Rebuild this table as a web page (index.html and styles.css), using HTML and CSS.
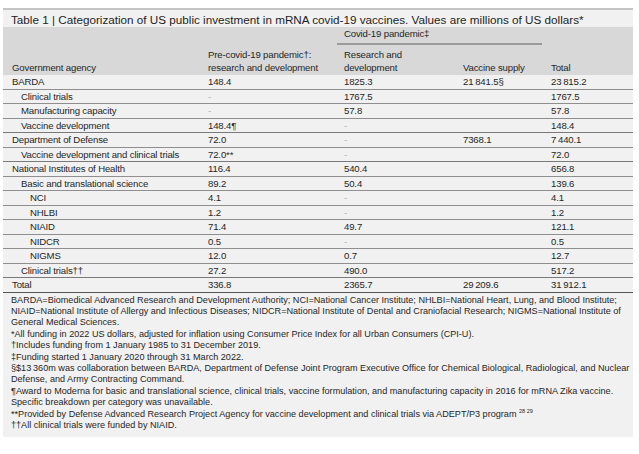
FILE: index.html
```html
<!DOCTYPE html>
<html>
<head>
<meta charset="utf-8">
<link rel="stylesheet" href="styles.css">
</head>
<body>
<div class="wrap">
  <div class="title">Table 1 | Categorization of US public investment in mRNA covid-19 vaccines. Values are millions of US dollars*</div>
  <table class="tbl">
    <colgroup>
      <col class="c1"><col class="c2"><col class="c3"><col class="c4"><col class="c5">
    </colgroup>
    <thead>
      <tr class="h1">
        <th></th><th></th>
        <th colspan="2" class="group"><div class="group-label">Covid-19 pandemic‡</div></th>
        <th></th>
      </tr>
      <tr class="h2">
        <th class="first">Government agency</th>
        <th>Pre-covid-19 pandemic†:<br>research and development</th>
        <th>Research and<br>development</th>
        <th>Vaccine supply</th>
        <th>Total</th>
      </tr>
    </thead>
    <tbody>
      <tr class="grp"><td class="l0">BARDA</td><td>148.4</td><td>1825.3</td><td>21&thinsp;841.5§</td><td>23&thinsp;815.2</td></tr>
      <tr><td class="l1">Clinical trials</td><td class="dash">-</td><td>1767.5</td><td></td><td>1767.5</td></tr>
      <tr><td class="l1">Manufacturing capacity</td><td class="dash">-</td><td>57.8</td><td></td><td>57.8</td></tr>
      <tr><td class="l1">Vaccine development</td><td>148.4¶</td><td class="dash">-</td><td></td><td>148.4</td></tr>
      <tr class="grp"><td class="l0">Department of Defense</td><td>72.0</td><td class="dash">-</td><td>7368.1</td><td>7&thinsp;440.1</td></tr>
      <tr><td class="l1">Vaccine development and clinical trials</td><td>72.0**</td><td class="dash">-</td><td></td><td>72.0</td></tr>
      <tr class="grp"><td class="l0">National Institutes of Health</td><td>116.4</td><td>540.4</td><td></td><td>656.8</td></tr>
      <tr><td class="l1">Basic and translational science</td><td>89.2</td><td>50.4</td><td></td><td>139.6</td></tr>
      <tr><td class="l2">NCI</td><td>4.1</td><td class="dash">-</td><td></td><td>4.1</td></tr>
      <tr><td class="l2">NHLBI</td><td>1.2</td><td class="dash">-</td><td></td><td>1.2</td></tr>
      <tr><td class="l2">NIAID</td><td>71.4</td><td>49.7</td><td></td><td>121.1</td></tr>
      <tr><td class="l2">NIDCR</td><td>0.5</td><td class="dash">-</td><td></td><td>0.5</td></tr>
      <tr><td class="l2">NIGMS</td><td>12.0</td><td>0.7</td><td></td><td>12.7</td></tr>
      <tr><td class="l1">Clinical trials††</td><td>27.2</td><td>490.0</td><td></td><td>517.2</td></tr>
      <tr class="grp total"><td class="l0">Total</td><td>336.8</td><td>2365.7</td><td>29&thinsp;209.6</td><td>31&thinsp;912.1</td></tr>
    </tbody>
  </table>
  <div class="notes">
    <p>BARDA=Biomedical Advanced Research and Development Authority; NCI=National Cancer Institute; NHLBI=National Heart, Lung, and Blood Institute;<br>NIAID=National Institute of Allergy and Infectious Diseases; NIDCR=National Institute of Dental and Craniofacial Research; NIGMS=National Institute of<br>General Medical Sciences.</p>
    <p>*All funding in 2022 US dollars, adjusted for inflation using Consumer Price Index for all Urban Consumers (CPI-U).</p>
    <p>†Includes funding from 1 January 1985 to 31 December 2019.</p>
    <p>‡Funding started 1 January 2020 through 31 March 2022.</p>
    <p>§$13&thinsp;360m was collaboration between BARDA, Department of Defense Joint Program Executive Office for Chemical Biological, Radiological, and Nuclear<br>Defense, and Army Contracting Command.</p>
    <p>¶Award to Moderna for basic and translational science, clinical trials, vaccine formulation, and manufacturing capacity in 2016 for mRNA Zika vaccine.<br>Specific breakdown per category was unavailable.</p>
    <p>**Provided by Defense Advanced Research Project Agency for vaccine development and clinical trials via ADEPT/P3 program <sup>28 29</sup></p>
    <p>††All clinical trials were funded by NIAID.</p>
  </div>
</div>
</body>
</html>
```

FILE: styles.css
```css
html, body {
  margin: 0;
  padding: 0;
  background: #ffffff;
}
body {
  font-family: "Liberation Sans", Arial, sans-serif;
  color: #262626;
}
.wrap {
  width: 630px;
  margin: 8px 0 0 3px;
  border-top: 2px solid #c4c4c4;
}
.title {
  background: #f1f1f1;
  font-size: 11.7px;
  line-height: 17px;
  padding: 1px 0 0 8px;
  height: 16px;
  color: #1e1e1e;
}
.tbl {
  width: 630px;
  border-collapse: collapse;
  table-layout: fixed;
  font-size: 9.6px;
  letter-spacing: -0.15px;
}
.c1 { width: 200px; }
.c2 { width: 136px; }
.c3 { width: 119px; }
.c4 { width: 88px; }
.c5 { width: 87px; }
.tbl th {
  background: #d8d8d8;
  font-weight: normal;
  text-align: left;
  vertical-align: bottom;
  padding: 0 0 0 5px;
  line-height: 13px;
  color: #262626;
}
.tbl th.first { padding-left: 9px; }
.h1 th { height: 17px; vertical-align: bottom; }
.h2 th { height: 29px; padding-bottom: 1px; }
.group { padding: 0 !important; }
.group-label {
  margin: 0 4px 0 -2px;
  padding: 0 0 3px 7px;
  border-bottom: 2px solid #9a9a9a;
  line-height: 13px;
}
.tbl td {
  background: #f1f1f1;
  padding: 0 0 0 5px;
  height: 13.5px;
  line-height: 13.5px;
  border-top: 1px solid #8f8f8f;
  white-space: nowrap;
}
.tbl tbody tr:first-child td { border-top: none; }
.tbl tr.grp td { border-top: 1px solid #7a7a7a; }
.tbl td.l0 { padding-left: 9px; }
.tbl td.l1 { padding-left: 18px; }
.tbl td.l2 { padding-left: 27px; }
.tbl td.dash { color: #b0b0b0; }
.tbl tr.total td { border-bottom: 1px solid #555; }
.notes {
  background: #f1f1f1;
  padding: 2px 4px 6px 8px;
  font-size: 9.1px;
  line-height: 11.4px;
  color: #262626;
  white-space: nowrap;
}
.notes p { margin: 0; }
.notes sup {
  font-size: 5.5px;
  line-height: 0;
  vertical-align: 4px;
}
```
